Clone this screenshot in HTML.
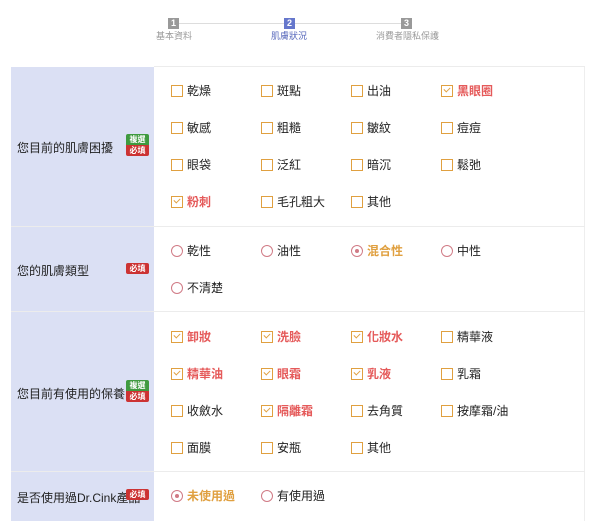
<!DOCTYPE html>
<html><head><meta charset="utf-8"><style>
*{margin:0;padding:0;box-sizing:border-box}
body{width:600px;height:520px;background:#fff;position:relative;overflow:hidden;font-family:"Liberation Sans","Noto Sans CJK TC",sans-serif;font-size:12px;color:#222}
.a{position:absolute}
.step{position:absolute;top:18px;width:11px;height:11px;background:#999;color:#fff;font-size:9px;font-weight:bold;text-align:center;line-height:11px}
.sl{position:absolute;top:29px;font-size:9px;color:#999;white-space:nowrap}
.lab{position:absolute;left:11px;width:143px;background:#dbe0f4}
.row{position:absolute;left:154px;width:431px;background:#fff;border-right:1px solid #eee}
.hr{position:absolute;left:11px;width:574px;height:1px;background:#ececec}
.lt{position:absolute;left:17px;font-size:12px;color:#222;white-space:nowrap}
.it{position:absolute;height:14px;line-height:14px;white-space:nowrap;padding-left:16px}
.it::before{content:"";position:absolute;left:0;top:1px;width:10px;height:10px;border:1.5px solid #e0a040;background:#fff}
.it.c{color:#e55a5a;font-weight:bold}
.it.c::after{content:"";position:absolute;left:3px;top:3px;width:5px;height:3px;border-left:1.3px solid #e0a040;border-bottom:1.3px solid #e0a040;transform:rotate(-45deg)}
.r{position:absolute;height:14px;line-height:14px;white-space:nowrap;padding-left:16px}
.r::before{content:"";position:absolute;left:0;top:1px;width:10px;height:10px;border:1.3px solid #d07a85;border-radius:50%;background:#fff}
.r.c{color:#e0a040;font-weight:bold}
.r.c::after{content:"";position:absolute;left:3.5px;top:4.5px;width:4px;height:4px;border-radius:50%;background:#d07a85}
.bd{position:absolute;left:126px;width:23px;height:11px;color:#fff;font-size:8px;font-weight:bold;text-align:center;line-height:11px;border-radius:2px}
.g{background:#3f9a3f}.rd{background:#cc3333}
</style></head><body>
<div class="a" style="left:177px;top:23px;width:230px;height:1px;background:#ddd"></div>
<div class="step" style="left:168px">1</div><div class="sl" style="left:156px">基本資料</div>
<div class="step" style="left:284px;background:#6677cc">2</div><div class="sl" style="left:271px;color:#5566bb">肌膚狀況</div>
<div class="step" style="left:401px">3</div><div class="sl" style="left:376px">消費者隱私保護</div>

<div class="hr" style="top:66px;left:154px;width:431px"></div>
<div class="lab" style="top:67px;height:454px"></div>
<div class="row" style="top:67px;height:454px"></div>
<div class="hr" style="top:226px"></div>
<div class="hr" style="top:311px"></div>
<div class="hr" style="top:471px"></div>

<div class="lt" style="top:139px">您目前的肌膚困擾</div>
<div class="bd g" style="top:134px;border-radius:2px 2px 0 0">複選</div><div class="bd rd" style="top:145px;border-radius:0 0 2px 2px">必填</div>
<div class="lt" style="top:262px">您的肌膚類型</div>
<div class="bd rd" style="top:263px">必填</div>
<div class="lt" style="top:385px">您目前有使用的保養品類</div>
<div class="bd g" style="top:380px;border-radius:2px 2px 0 0">複選</div><div class="bd rd" style="top:391px;border-radius:0 0 2px 2px">必填</div>
<div class="lt" style="top:489px">是否使用過Dr.Cink產品</div>
<div class="bd rd" style="top:489px">必填</div>

<div class="it" style="left:171px;top:84px">乾燥</div><div class="it" style="left:261px;top:84px">斑點</div><div class="it" style="left:351px;top:84px">出油</div><div class="it c" style="left:441px;top:84px">黑眼圈</div>
<div class="it" style="left:171px;top:121px">敏感</div><div class="it" style="left:261px;top:121px">粗糙</div><div class="it" style="left:351px;top:121px">皺紋</div><div class="it" style="left:441px;top:121px">痘痘</div>
<div class="it" style="left:171px;top:158px">眼袋</div><div class="it" style="left:261px;top:158px">泛紅</div><div class="it" style="left:351px;top:158px">暗沉</div><div class="it" style="left:441px;top:158px">鬆弛</div>
<div class="it c" style="left:171px;top:195px">粉刺</div><div class="it" style="left:261px;top:195px">毛孔粗大</div><div class="it" style="left:351px;top:195px">其他</div>

<div class="r" style="left:171px;top:244px">乾性</div><div class="r" style="left:261px;top:244px">油性</div><div class="r c" style="left:351px;top:244px">混合性</div><div class="r" style="left:441px;top:244px">中性</div>
<div class="r" style="left:171px;top:281px">不清楚</div>

<div class="it c" style="left:171px;top:330px">卸妝</div><div class="it c" style="left:261px;top:330px">洗臉</div><div class="it c" style="left:351px;top:330px">化妝水</div><div class="it" style="left:441px;top:330px">精華液</div>
<div class="it c" style="left:171px;top:367px">精華油</div><div class="it c" style="left:261px;top:367px">眼霜</div><div class="it c" style="left:351px;top:367px">乳液</div><div class="it" style="left:441px;top:367px">乳霜</div>
<div class="it" style="left:171px;top:404px">收斂水</div><div class="it c" style="left:261px;top:404px">隔離霜</div><div class="it" style="left:351px;top:404px">去角質</div><div class="it" style="left:441px;top:404px">按摩霜/油</div>
<div class="it" style="left:171px;top:441px">面膜</div><div class="it" style="left:261px;top:441px">安瓶</div><div class="it" style="left:351px;top:441px">其他</div>

<div class="r c" style="left:171px;top:489px">未使用過</div><div class="r" style="left:261px;top:489px">有使用過</div>
</body></html>
